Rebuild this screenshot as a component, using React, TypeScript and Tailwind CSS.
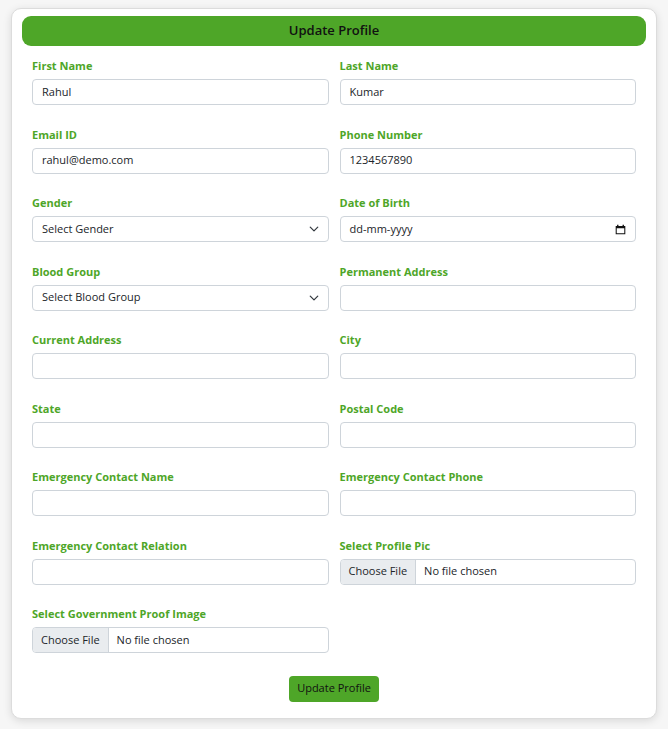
import React from "react";

const G = "text-[#4ea628]";

function Label({ t }: { t: string }) {
  return <div className={`text-[11px] font-bold ${G} h-[14px] leading-[14px] mb-[6px]`}>{t}</div>;
}
function Box({ children, cls = "" }: { children?: React.ReactNode; cls?: string }) {
  return (
    <div className={`h-[26px] border border-[#ced4da] rounded-[4px] bg-white flex items-center text-[11px] text-[#212529] ${cls}`}>{children}</div>
  );
}
function Input({ v = "" }: { v?: string }) {
  return <Box cls="px-[9px]">{v}</Box>;
}
function Select({ v }: { v: string }) {
  return (
    <Box cls="px-[9px] justify-between">
      <span>{v}</span>
      <svg width="10" height="10" viewBox="0 0 16 16" fill="none" stroke="#343a40" strokeWidth="2" strokeLinecap="round" strokeLinejoin="round"><path d="M2 5l6 6 6-6" /></svg>
    </Box>
  );
}
function DateIn() {
  return (
    <Box cls="px-[9px] justify-between">
      <span>dd-mm-yyyy</span>
      <svg width="11" height="11" viewBox="0 0 16 16" fill="#111"><path d="M3 1h2v2h6V1h2v2h2v12H1V3h2V1zm-0.5 5v7.5h11V6h-11z" /></svg>
    </Box>
  );
}
function File() {
  return (
    <Box cls="overflow-hidden">
      <span className="h-full px-[8px] flex items-center bg-[#e9ecef] border-r border-[#ced4da]">Choose File</span>
      <span className="px-[8px]">No file chosen</span>
    </Box>
  );
}
function Field({ l, c }: { l: string; c: React.ReactNode }) {
  return (
    <div className="mb-[22.5px]">
      <Label t={l} />
      {c}
    </div>
  );
}

export default function App() {
  return (
    <div className="min-h-[729px] bg-[#f6f6f6] pt-[8px] px-[11px]" style={{ fontFamily: '"Open Sans", "Noto Sans", sans-serif' }}>
      <div className="bg-white border border-[#dcdcdc] rounded-[10px] shadow-[0_2px_8px_rgba(0,0,0,0.12)] px-[10px] pt-[7px] pb-[17px] h-[711px]">
        <div className="h-[30px] bg-[#4ea628] rounded-[9px] flex items-center justify-center text-[13px] font-semibold text-[#111]">Update Profile</div>
        <div className="px-[10px] pt-[13px]">
          <div className="grid grid-cols-2 gap-x-[11px]">
            <Field l="First Name" c={<Input v="Rahul" />} />
            <Field l="Last Name" c={<Input v="Kumar" />} />
            <Field l="Email ID" c={<Input v="rahul@demo.com" />} />
            <Field l="Phone Number" c={<Input v="1234567890" />} />
            <Field l="Gender" c={<Select v="Select Gender" />} />
            <Field l="Date of Birth" c={<DateIn />} />
            <Field l="Blood Group" c={<Select v="Select Blood Group" />} />
            <Field l="Permanent Address" c={<Input />} />
            <Field l="Current Address" c={<Input />} />
            <Field l="City" c={<Input />} />
            <Field l="State" c={<Input />} />
            <Field l="Postal Code" c={<Input />} />
            <Field l="Emergency Contact Name" c={<Input />} />
            <Field l="Emergency Contact Phone" c={<Input />} />
            <Field l="Emergency Contact Relation" c={<Input />} />
            <Field l="Select Profile Pic" c={<File />} />
            <Field l="Select Government Proof Image" c={<File />} />
          </div>
          <div className="flex justify-center">
            <button className="h-[26px] px-[8px] bg-[#4ea628] rounded-[4px] text-[11px] text-[#111]">Update Profile</button>
          </div>
        </div>
      </div>
    </div>
  );
}
